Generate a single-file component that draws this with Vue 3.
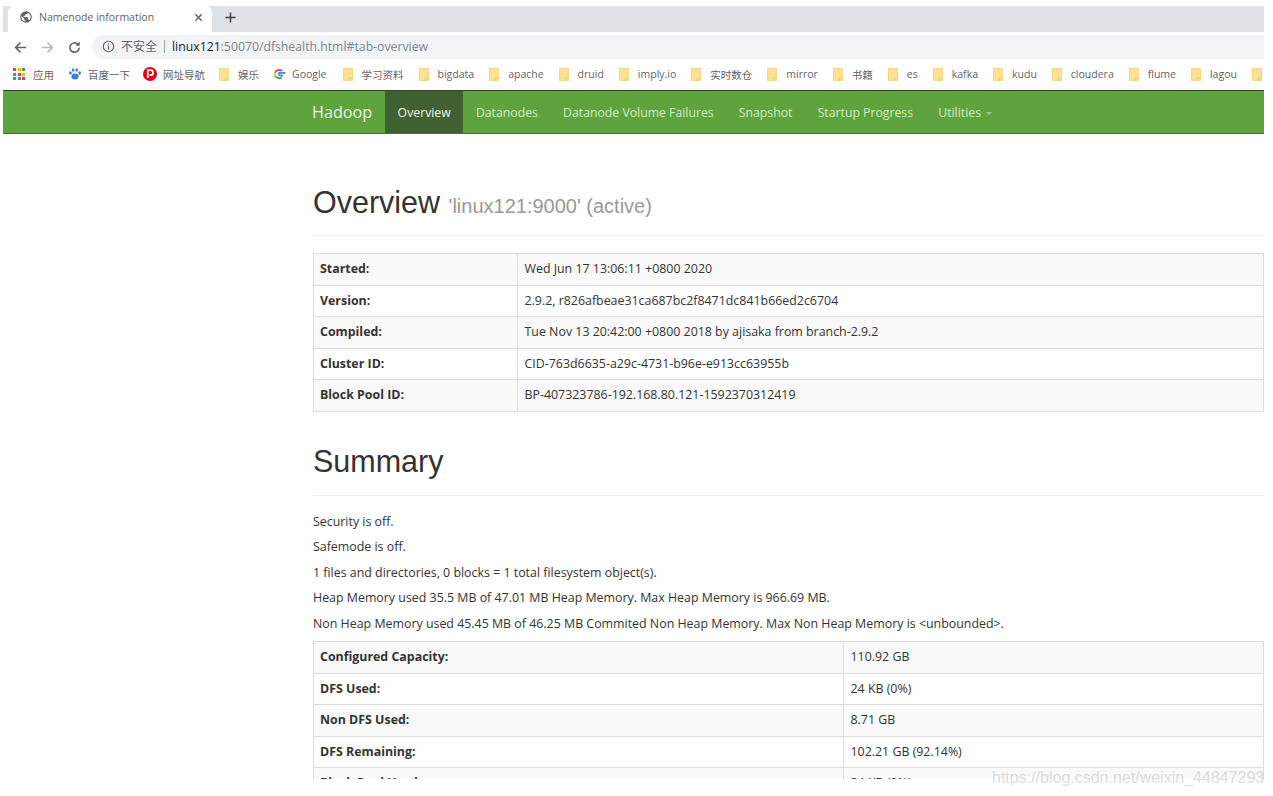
<script setup>
const bookmarks = [
  { t: '娱乐' }, { t: 'Google', g: 1 }, { t: '学习资料' }, { t: 'bigdata' }, { t: 'apache' },
  { t: 'druid' }, { t: 'imply.io' }, { t: '实时数仓' }, { t: 'mirror' }, { t: '书籍' }, { t: 'es' },
  { t: 'kafka' }, { t: 'kudu' }, { t: 'cloudera' }, { t: 'flume' }, { t: 'lagou' }, { t: '' }
]
const nav = ['Datanodes', 'Datanode Volume Failures', 'Snapshot', 'Startup Progress']
const overview = [
  ['Started:', 'Wed Jun 17 13:06:11 +0800 2020'],
  ['Version:', '2.9.2, r826afbeae31ca687bc2f8471dc841b66ed2c6704'],
  ['Compiled:', 'Tue Nov 13 20:42:00 +0800 2018 by ajisaka from branch-2.9.2'],
  ['Cluster ID:', 'CID-763d6635-a29c-4731-b96e-e913cc63955b'],
  ['Block Pool ID:', 'BP-407323786-192.168.80.121-1592370312419']
]
const lines = [
  'Security is off.',
  'Safemode is off.',
  '1 files and directories, 0 blocks = 1 total filesystem object(s).',
  'Heap Memory used 35.5 MB of 47.01 MB Heap Memory. Max Heap Memory is 966.69 MB.',
  'Non Heap Memory used 45.45 MB of 46.25 MB Commited Non Heap Memory. Max Non Heap Memory is <unbounded>.'
]
const summary = [
  ['Configured Capacity:', '110.92 GB'],
  ['DFS Used:', '24 KB (0%)'],
  ['Non DFS Used:', '8.71 GB'],
  ['DFS Remaining:', '102.21 GB (92.14%)'],
  ['Block Pool Used:', '24 KB (0%)']
]
const appColors = ['#ea4335', '#fbbc05', '#34a853', '#4285f4', '#ea4335', '#fbbc05', '#34a853', '#4285f4', '#ea4335']
</script>

<template>
  <div class="shot">
    <div class="browser">
      <div class="tabstrip">
        <div class="tab">
          <svg class="globe" viewBox="0 0 24 24"><path fill="#5f6368" d="M12 2a10 10 0 1 0 0 20 10 10 0 0 0 0-20zm-1 17.900A8 8 0 0 1 4.200 10.200L9 15v1a2 2 0 0 0 2 2v1.900zm6.900-2.500A2 2 0 0 0 16 16h-1v-3a1 1 0 0 0-1-1H8v-2h2a1 1 0 0 0 1-1V7h2a2 2 0 0 0 2-2v-.4a8 8 0 0 1 2.900 12.800z"/></svg>
          <span class="tabtitle">Namenode information</span>
          <svg class="close" viewBox="0 0 10 10"><path d="M1.500 1.500l7 7M8.500 1.500l-7 7" stroke="#5f6368" stroke-width="1.500"/></svg>
        </div>
        <svg class="plus" viewBox="0 0 12 12"><path d="M6 .5v11M.5 6h11" stroke="#3c4043" stroke-width="1.600"/></svg>
      </div>
      <div class="toolbar">
        <svg class="navicon back" viewBox="0 0 16 16"><path d="M14 8H3M8 2.800L2.800 8 8 13.200" fill="none" stroke="#5f6368" stroke-width="1.700"/></svg>
        <svg class="navicon fwd" viewBox="0 0 16 16"><path d="M2 8h11M8 2.800L13.200 8 8 13.200" fill="none" stroke="#b5b8bc" stroke-width="1.700"/></svg>
        <svg class="navicon reload" viewBox="0 0 16 16"><path d="M13 8a5 5 0 1 1-1.500-3.500" fill="none" stroke="#5f6368" stroke-width="1.700"/><path d="M13.600 1.600v4.600H9z" fill="#5f6368"/></svg>
        <div class="omnibox">
          <svg class="info" viewBox="0 0 14 14"><circle cx="7" cy="7" r="5.600" fill="none" stroke="#5f6368" stroke-width="1.200"/><path d="M7 6.200v4M7 3.800v1.300" stroke="#5f6368" stroke-width="1.300"/></svg>
          <span class="insecure">不安全</span>
          <span class="sep"></span>
          <span class="url"><span class="host">linux121</span>:50070/dfshealth.html#tab-overview</span>
        </div>
      </div>
      <div class="bookmarks">
        <div class="bm">
          <span class="apps"><i v-for="(c, i) in appColors" :key="i" :style="{ background: c }"></i></span>
          <span>应用</span>
        </div>
        <div class="bm">
          <svg class="bmicon" viewBox="0 0 14 14"><g fill="#3b7ee8"><ellipse cx="7" cy="9.600" rx="3.600" ry="3"/><ellipse cx="2.400" cy="6" rx="1.400" ry="1.800"/><ellipse cx="11.600" cy="6" rx="1.400" ry="1.800"/><ellipse cx="5.200" cy="3" rx="1.300" ry="1.800"/><ellipse cx="8.800" cy="3" rx="1.300" ry="1.800"/></g></svg>
          <span>百度一下</span>
        </div>
        <div class="bm">
          <svg class="bmicon" viewBox="0 0 14 14"><circle cx="7" cy="7" r="7" fill="#e60012"/><path d="M4.800 11V3.200h2.800a2.400 2.400 0 0 1 0 4.900H6.500" fill="none" stroke="#fff" stroke-width="1.800"/></svg>
          <span>网址导航</span>
        </div>
        <div v-for="b in bookmarks" :key="b.t" class="bm" :class="{ fold: !b.g }">
          <svg v-if="b.g" class="bmicon" viewBox="0 0 14 14"><path d="M12.600 7.100c0-.4 0-.8-.1-1.200H7v2.300h3.200a2.700 2.700 0 0 1-1.200 1.800" fill="none" stroke="#4285f4" stroke-width="1.600"/><path d="M3 8.500a4.500 4.500 0 0 0 6.500 2" fill="none" stroke="#34a853" stroke-width="1.800"/><path d="M3 8.500a4.500 4.500 0 0 1 0-3" fill="none" stroke="#fbbc05" stroke-width="1.800"/><path d="M3 5.500a4.500 4.500 0 0 1 7-1.500" fill="none" stroke="#ea4335" stroke-width="1.800"/></svg>
          <svg v-else class="folder" viewBox="0 0 11 14"><path d="M.5.500h10v13H.5z" fill="#fde293" stroke="#f5d375"/><path d="M7 13.500v-2.500h3.500" fill="none" stroke="#f0c95c"/></svg>
          <span v-if="b.t">{{ b.t }}</span>
        </div>
      </div>
      <nav class="navbar">
        <a class="brand">Hadoop</a>
        <a class="navitem active">Overview</a>
        <a v-for="n in nav" :key="n" class="navitem">{{ n }}</a>
        <a class="navitem">Utilities <span class="caret"></span></a>
      </nav>
      <main class="content">
        <div class="pageheader">
          <h1>Overview <small>'linux121:9000' (active)</small></h1>
        </div>
        <table class="info-table first">
          <tbody>
            <tr v-for="r in overview" :key="r[0]"><th>{{ r[0] }}</th><td>{{ r[1] }}</td></tr>
          </tbody>
        </table>
        <div class="pageheader second">
          <h1>Summary</h1>
        </div>
        <p v-for="l in lines" :key="l">{{ l }}</p>
        <table class="info-table sum">
          <tbody>
            <tr v-for="r in summary" :key="r[0]"><th>{{ r[0] }}</th><td>{{ r[1] }}</td></tr>
          </tbody>
        </table>
      </main>
    </div>
    <div class="watermark">https://blog.csdn.net/weixin_44847293</div>
  </div>
</template>

<style>
html, body { margin: 0; background: #fff; }
</style>

<style scoped>
.shot { width: 1273px; height: 796px; overflow: hidden; background: #fff; position: relative; }
.browser { width: 1264px; height: 779px; overflow: hidden; padding-top: 6px; box-sizing: border-box; font-family: "Open Sans", "Noto Sans CJK SC", sans-serif; }
.tabstrip { margin-left: 3px; height: 26px; background: #dee1e6; display: flex; align-items: center; }
.tab { margin-left: 5px; width: 204px; height: 26px; background: #fff; border-radius: 6px 6px 0 0; display: flex; align-items: center; box-sizing: border-box; padding: 0 8px 4px 11px; }
.globe { width: 14px; height: 14px; flex: none; }
.tabtitle { font-size: 10.500px; color: #5f6368; margin-left: 6px; flex: 1; white-space: nowrap; }
.close { width: 9px; height: 9px; flex: none; margin-right: 1px; }
.plus { width: 11px; height: 11px; margin: 0 0 4px 13px; }
.toolbar { margin-left: 3px; height: 30px; padding-top: 3px; box-sizing: border-box; display: flex; align-items: flex-start; }
.navicon { width: 15px; height: 15px; flex: none; margin-top: 5px; }
.back { margin-left: 10px; }
.fwd { margin-left: 12px; }
.reload { margin-left: 12px; }
.omnibox { margin-left: 10px; flex: 1; height: 24px; background: #f1f3f4; border-radius: 12px 0 0 12px; display: flex; align-items: center; padding: 0 0 2px 10px; box-sizing: border-box; }
.info { width: 13px; height: 13px; flex: none; }
.insecure { font-size: 12px; color: #5f6368; margin-left: 6px; }
.sep { width: 1px; height: 13px; background: #9aa0a6; margin: 0 7px; }
.url { font-size: 12.250px; color: #80868b; white-space: nowrap; }
.host { color: #202124; }
.bookmarks { margin-left: 3px; height: 26px; display: flex; align-items: center; padding: 0 0 2px 10px; box-sizing: border-box; gap: 15px; font-size: 10.500px; color: #5f6368; white-space: nowrap; }
.bm { display: flex; align-items: center; gap: 6px; }
.bm.fold { gap: 9px; }
.bm:nth-child(1) { margin-right: -1px; }
.bm:nth-child(2) { margin-right: -2px; }
.bm:nth-child(3) { margin-right: -1px; }
.bm:nth-child(4) { margin-right: -2px; }
.bm:nth-child(5) { margin-right: 1px; }
.apps { width: 12px; height: 12px; margin-right: 2px; display: grid; grid-template-columns: repeat(3, 3px); gap: 1.500px; }
.apps i { display: block; width: 3px; height: 3px; }
.bmicon { width: 14px; height: 14px; flex: none; }
.folder { width: 10px; height: 13px; flex: none; }
.navbar { margin-left: 3px; height: 44px; box-sizing: border-box; margin-top: 2px; background: #5fa33e; border-top: 1px solid #3a3f3a; border-bottom: 1px solid #4a6a3a; display: flex; align-items: stretch; padding-left: 309px; }
.brand { color: #eaf3e5; font-size: 16.200px; display: flex; align-items: center; margin-right: 12.800px; }
.navitem { color: #d5ebc9; font-size: 12.250px; display: flex; align-items: center; padding: 0 12.600px; white-space: nowrap; }
.navitem.active { background: #426133; color: #eef5ea; }
.caret { display: inline-block; margin-left: 5px; margin-top: 2px; border-top: 3px solid #9dc888; border-left: 3px solid transparent; border-right: 3px solid transparent; }
.content { margin-left: 313px; }
.pageheader { height: 102px; border-bottom: 1px solid #eee; box-sizing: border-box; padding-top: 50px; }
.pageheader.second { height: 84px; padding-top: 31px; margin-bottom: 13px; }
h1 { margin: 0; font: 400 30.500px/36px "Liberation Sans", sans-serif; color: #333; }
h1 small { font-size: 20px; color: #999; }
table { border-collapse: collapse; width: 951px; table-layout: fixed; font-size: 12.400px; color: #333; }
.first { margin-top: 17px; }
.sum { margin-top: 5px; }
.first th { width: 204px; }
.sum th { width: 530px; }
th, td { border: 1px solid #ddd; height: 31.500px; padding: 0 6.500px 1px; box-sizing: border-box; text-align: left; white-space: nowrap; }
th { font-weight: 700; padding-left: 6px; }
tr:nth-child(odd) th, tr:nth-child(odd) td { background: #f9f9f9; }
p { margin: 0; height: 25.500px; line-height: 26.500px; font-size: 12.400px; color: #333; white-space: nowrap; }
.watermark { position: absolute; left: 992px; top: 767px; font: 16px/22px "Liberation Sans", sans-serif; color: rgba(170,170,170,.4); white-space: nowrap; }
</style>
